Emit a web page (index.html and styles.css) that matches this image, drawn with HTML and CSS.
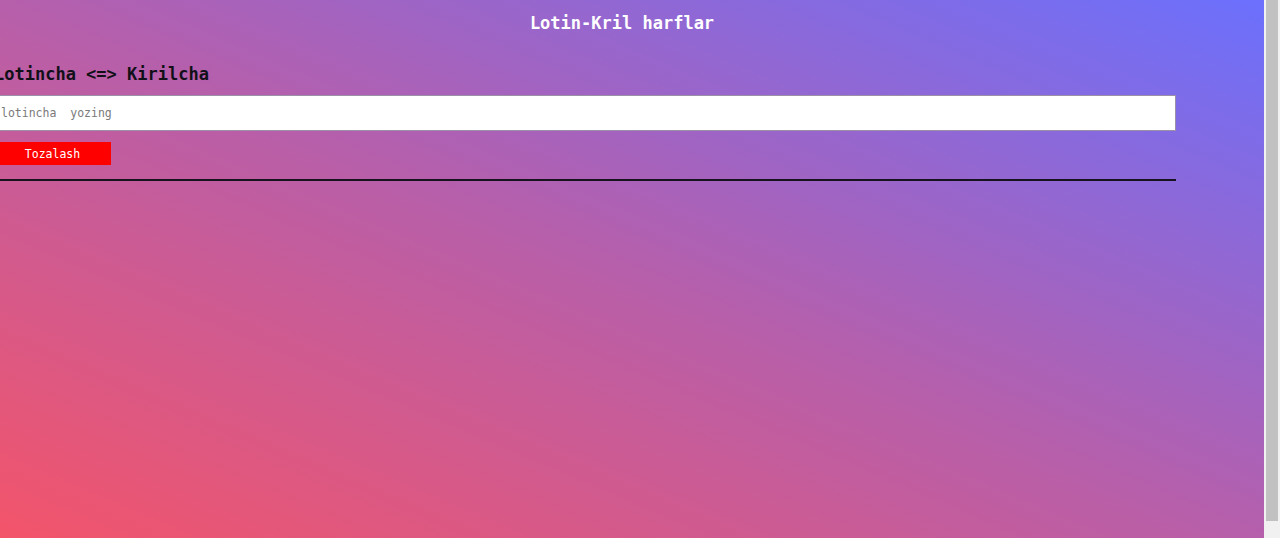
FILE: index.html
```html
<!DOCTYPE html>
<html lang="uz">
<head>
<meta charset="utf-8">
<title>Lotin-Kril harflar</title>
<link rel="stylesheet" href="styles.css">
</head>
<body>
  <div class="page">
    <header class="top">
      <h1 class="title">Lotin-Kril harflar</h1>
    </header>
    <main class="wrap">
      <h2 class="heading">Lotincha &lt;=&gt; Kirilcha</h2>
      <input class="field" type="text" placeholder="lotincha  yozing">
      <button class="clear" type="button">Tozalash</button>
      <div class="output"></div>
    </main>
  </div>
  <div class="scrollbar" aria-hidden="true"><div class="thumb"></div></div>
</body>
</html>
```
FILE: styles.css
```css
html, body {
  margin: 0;
  height: 100%;
}
body {
  display: flex;
  overflow: hidden;
  font-family: "DejaVu Sans Mono", "Liberation Mono", monospace;
}
.page {
  flex: 1;
  min-width: 0;
  height: 100%;
  padding: 8px;
  box-sizing: border-box;
  background: linear-gradient(to top right, #f3546a 0%, #b65fab 50%, #6b70fd 100%);
}
.scrollbar {
  width: 16px;
  flex: none;
  background: #f1f1f1;
  padding: 0 2px;
  box-sizing: border-box;
}
.thumb {
  height: 521px;
  background: #c1c1c1;
}
.top {
  padding: 5px 20px 0 0;
  display: flex;
  justify-content: center;
}
.title {
  margin: 0;
  font-size: 17px;
  line-height: 20px;
  font-weight: bold;
  color: #ffffff;
}
.wrap {
  margin: 31px 0 0 -14px;
  width: 1182px;
  display: flex;
  flex-direction: column;
  align-items: flex-start;
}
.heading {
  margin: 0;
  font-size: 17px;
  line-height: 20px;
  font-weight: bold;
  color: #111018;
}
.field {
  margin-top: 11px;
  box-sizing: border-box;
  width: 100%;
  height: 36px;
  padding: 0 6px;
  border: 1px solid #9c8fa8;
  background: #ffffff;
  font-family: "DejaVu Sans Mono", "Liberation Mono", monospace;
  font-size: 11.5px;
  outline: none;
}
.field::placeholder {
  color: #7a7a7a;
  white-space: pre;
}
.clear {
  margin-top: 11px;
  width: 117px;
  height: 23px;
  padding: 0;
  border: none;
  background: #ff0000;
  color: #ffffff;
  font-family: "DejaVu Sans Mono", "Liberation Mono", monospace;
  font-size: 11.5px;
}
.output {
  margin-top: 14px;
  width: 100%;
  border-bottom: 2px solid #16121e;
}
```
